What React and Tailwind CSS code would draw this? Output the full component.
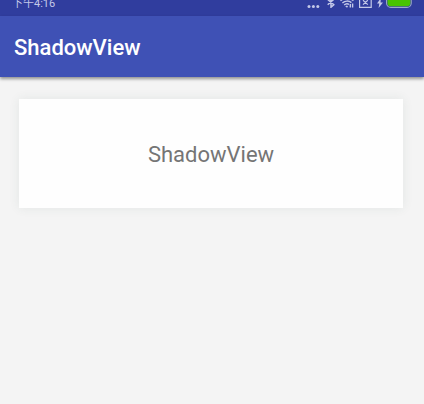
function StatusIcons() {
  return (
    <div className="flex items-end gap-[5px] pb-2 text-[#c3c8e8]" aria-hidden="true">
      <svg className="mr-0.5" width="13" height="12" viewBox="0 0 13 12" fill="currentColor">
        <circle cx="2" cy="10.4" r="1.5" />
        <circle cx="6.4" cy="10.4" r="1.5" />
        <circle cx="10.8" cy="10.4" r="1.5" />
      </svg>
      <svg width="8" height="12" viewBox="0 0 8 12" fill="none" stroke="currentColor" strokeWidth="1.5">
        <path d="M.7 3.4 6.8 8.7 4 11.2V.8l2.8 2.5L.7 8.7" />
      </svg>
      <svg width="14" height="12" viewBox="0 0 14 12" fill="none" stroke="currentColor" strokeWidth="1.4">
        <path d="M.5 4.8C4 1.6 10 1.6 13.4 4.8M2.4 7C5 4.5 8.9 4.5 11.4 6.6M4.2 9.1c1.5-1.6 3.3-1.7 4.8-.7" />
        <path d="M5.2 10.2 7 9.4l1 1L7 11.8Z" fill="currentColor" stroke="none" />
        <path d="M10.3 8v3.6M12.6 7.5v4" />
      </svg>
      <svg width="13" height="12" viewBox="0 0 13 12" fill="none" stroke="currentColor" strokeWidth="1.2">
        <path d="M.6.6h11.6v10.8H.6ZM4 4.2l4.8 4.4m0-4.4L4 8.6" />
      </svg>
      <svg width="6" height="12" viewBox="0 0 6 12" fill="currentColor">
        <path d="M3.9 2 0 7.5h2.3L1.6 12 6 6.5H3.5Z" />
      </svg>
      <svg className="-ml-0.5" width="26" height="12" viewBox="0 0 26 12">
        <rect x=".6" y=".6" width="24.6" height="10.8" rx="4.2" fill="none" stroke="#9fa9c8" strokeWidth="1.1" />
        <rect x="1.5" y="1.5" width="22.8" height="8.8" rx="3.4" fill="#48c400" />
      </svg>
    </div>
  );
}

export default function App() {
  return (
    <div className="min-h-screen bg-[#f4f4f4] font-[Roboto,'Noto_Sans_CJK_SC',sans-serif]">
      <div className="flex h-4 items-end justify-between overflow-hidden bg-[#303d9e] px-3">
        <time className="pb-1 text-[11px] leading-4 text-[#c3c8e8]">下午4:16</time>
        <StatusIcons />
      </div>
      <header className="flex h-[61px] items-center bg-[#3f51b5] px-3.5 pt-0.5 shadow-[0_2px_3px_rgba(0,0,0,0.4)]">
        <h1 className="text-[22px] leading-7 font-medium text-white">ShadowView</h1>
      </header>
      <main className="pt-[22px] pr-[21px] pl-[19px]">
        <section className="flex items-center justify-center bg-[#fefefe] pt-[42px] pb-[39px] shadow-[0_0_10px_rgba(60,90,80,0.09)]">
          <p className="text-[22px] leading-7 text-[#757575]">ShadowView</p>
        </section>
      </main>
    </div>
  );
}
